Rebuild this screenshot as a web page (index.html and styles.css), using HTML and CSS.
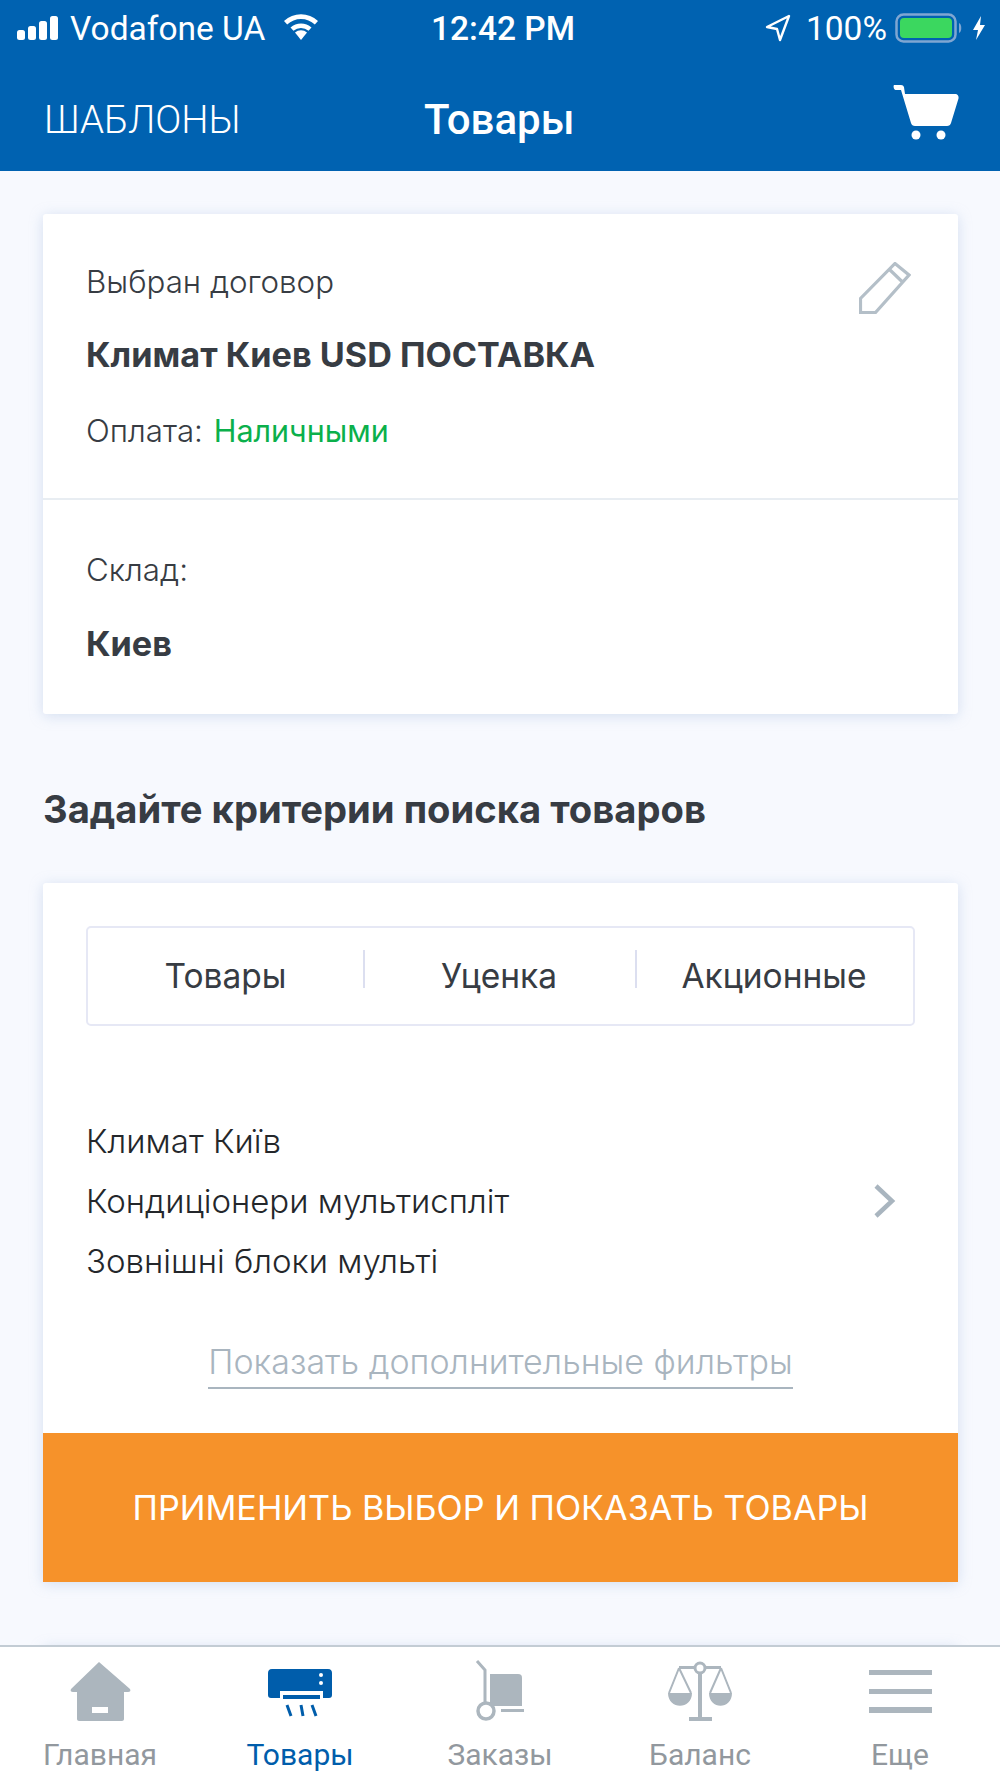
FILE: index.html
```html
<!DOCTYPE html>
<html lang="ru">
<head>
  <meta charset="UTF-8" />
  <meta name="viewport" content="width=device-width, initial-scale=1.0" />
  <title>Товары</title>
  <link rel="stylesheet" href="styles.css">
</head>
<body>
<div class="screen">
  <header class="top">
    <div class="status">
      <div class="status-left">
        <svg class="signal" width="44" height="26" viewBox="0 0 44 26"><rect x="1" y="15" width="8" height="10" rx="2.5"/><rect x="12" y="11" width="8" height="14" rx="2.5"/><rect x="23" y="6" width="8" height="19" rx="2.5"/><rect x="34" y="1" width="8" height="24" rx="2.5"/></svg>
        <span>Vodafone UA</span>
        <svg class="wifi" width="38" height="28" viewBox="0 0 38 28"><path d="M19 27l-6-7.5a9 9 0 0 1 12 0z"/><path d="M2 8a25 25 0 0 1 34 0l-3.200 3.600a20 20 0 0 0-27.600 0z"/><path d="M8.500 14.500a16 16 0 0 1 21 0l-3 3.200a11.500 11.500 0 0 0-15 0z"/></svg>
      </div>
      <div class="clock">12:42 PM</div>
      <div class="status-right">
        <svg class="arrow" width="26" height="28" viewBox="0 0 26 28"><path d="M24 2L2 13l10 2 3 11z" fill="none" stroke="#fff" stroke-width="2.400" stroke-linejoin="round"/></svg>
        <span>100%</span>
        <svg width="68" height="30" viewBox="0 0 68 30"><rect x="1.500" y="1.500" width="59" height="27" rx="7" fill="none" stroke="#7fa6d2" stroke-width="2.500"/><rect x="5" y="5" width="52" height="20" rx="4" fill="#3bd75f"/><path d="M64 10c3 1 3 9 0 10z" fill="#7fa6d2"/></svg>
        <svg class="bolt" width="14" height="26" viewBox="0 0 14 26"><path d="M9 1L1 15h5l-2 10 9-15H8z" fill="#fff"/></svg>
      </div>
    </div>
    <nav class="nav">
      <a class="nav-left">ШАБЛОНЫ</a>
      <h1>Товары</h1>
      <svg class="cart" width="66" height="56" viewBox="0 0 66 56"><path d="M1 0h7c1.500 0 2.500.8 3 2.200L12 9h50c2.500 0 4 2 3.500 4.500L58 38c-.5 2-2 3-4 3H22c-2 0-3.500-1-4-3L8 5H2.500C1 5 0 1 1 0z" fill="#fff"/><circle cx="23" cy="50" r="4.500" fill="#fff"/><circle cx="48" cy="50" r="4.500" fill="#fff"/></svg>
    </nav>
  </header>

  <main class="content">
    <section class="card">
      <div class="block block-contract">
        <div class="label-row">
          <p class="label">Выбран договор</p>
          <svg class="edit" width="52" height="52" viewBox="0 0 52 52"><path d="M1.500 36.500V50.500H16.500L50 13 36 1.500z M30 7L44 20.500" fill="none" stroke="#b4bfc8" stroke-width="3.200"/></svg>
        </div>
        <p class="value">Климат Киев USD ПОСТАВКА</p>
        <p class="pay">Оплата: <span class="green">Наличными</span></p>
      </div>
      <div class="block block-stock">
        <p class="label">Склад:</p>
        <p class="value">Киев</p>
      </div>
    </section>

    <h2>Задайте критерии поиска товаров</h2>

    <section class="card">
      <div class="filters">
        <div class="tabs">
          <div class="tab">Товары</div>
          <div class="tab">Уценка</div>
          <div class="tab">Акционные</div>
        </div>
        <div class="path">
          <div class="path-lines">
            <p>Климат Київ</p>
            <p>Кондиціонери мультиспліт</p>
            <p>Зовнішні блоки мульті</p>
          </div>
          <svg width="24" height="36" viewBox="0 0 24 36"><path d="M3 3l16 15L3 33" fill="none" stroke="#a9b5bf" stroke-width="4.500"/></svg>
        </div>
        <div class="more"><a>Показать дополнительные фильтры</a></div>
      </div>
      <button class="apply">ПРИМЕНИТЬ ВЫБОР И ПОКАЗАТЬ ТОВАРЫ</button>
    </section>

    <section class="card card-next"></section>
  </main>

  <footer class="tabbar">
    <div class="tabitem">
      <svg width="66" height="62" viewBox="0 0 66 62"><path fill-rule="evenodd" d="M32 2L63 29c1 2 0 3-2 3h-4v27c0 1-1 2-2 2H12c-1 0-2-1-2-2V32H6c-2 0-3-1-2-3z M25 47v6h16v-6z" fill="#acb6be"/></svg>
      <span>Главная</span>
    </div>
    <div class="tabitem active">
      <svg width="66" height="62" viewBox="0 0 66 62"><path d="M5 9h56c3 0 4 2 4 4v22c0 2-1 3-3 3h-6V31H13v7H4c-2 0-3-1-3-3V13c0-2 1-4 4-4z" fill="#005dab"/><rect x="16" y="35" width="37" height="4" fill="#005dab"/><circle cx="54" cy="15" r="2" fill="#fff"/><circle cx="54" cy="23" r="2" fill="#fff"/><path d="M20 45l4 11M34 45l2 11M45 45l4 11" stroke="#005dab" stroke-width="3"/></svg>
      <span>Товары</span>
    </div>
    <div class="tabitem">
      <svg width="50" height="62" viewBox="0 0 50 62"><path d="M2 1l8 9v32" fill="none" stroke="#acb6be" stroke-width="3"/><path d="M15 14h28c3 0 4 1.500 4 4v28H15z" fill="#acb6be"/><circle cx="11" cy="51" r="8" fill="none" stroke="#acb6be" stroke-width="3.500"/><path d="M26 49h23v3H26z" fill="#acb6be"/></svg>
      <span>Заказы</span>
    </div>
    <div class="tabitem">
      <svg width="66" height="62" viewBox="0 0 66 62"><path d="M33 10v47" fill="none" stroke="#acb6be" stroke-width="4"/><path d="M22 57h23v4H22zM12 6h42v3H12z" fill="#acb6be"/><circle cx="33" cy="8" r="5" fill="#fff" stroke="#acb6be" stroke-width="3"/><path d="M12 8L2 33M12 8l12 25M54 8L43 33M54 8l10 25" fill="none" stroke="#acb6be" stroke-width="2"/><path d="M1 33h24c0 17-24 17-24 0zM42 33h23c0 17-23 17-23 0z" fill="#acb6be"/></svg>
      <span>Баланс</span>
    </div>
    <div class="tabitem">
      <svg width="66" height="62" viewBox="0 0 66 62"><path d="M2 10h63v5H2zM2 29h63v5H2zM2 47h63v6H2z" fill="#acb6be"/></svg>
      <span>Еще</span>
    </div>
  </footer>
</div>
</body>
</html>
```

FILE: styles.css
```css
html, body {
  margin: 0;
  padding: 0;
}

body {
  font-family: Inter, "Noto Sans", sans-serif;
  background: #f7f9fe;
  color: #373c43;
}

p, h1, h2 {
  margin: 0;
}

.screen {
  width: 1000px;
  height: 1778px;
  display: flex;
  flex-direction: column;
  overflow: hidden;
}

.top {
  height: 171px;
  flex-shrink: 0;
  background: #0062b1;
  color: #fff;
  font-family: Roboto, "Liberation Sans", sans-serif;
}

.status {
  height: 56px;
  padding: 0 14px 2px 16px;
  display: grid;
  grid-template-columns: 1fr auto 1fr;
  align-items: center;
  font-size: 33.5px;
}

.status-left, .status-right {
  display: flex;
  align-items: center;
}

.status-left {
  gap: 10px;
}

.status-right {
  justify-content: flex-end;
  gap: 8px;
}

.signal {
  fill: #fff;
}

.wifi {
  fill: #fff;
  margin-left: 7px;
  margin-top: -2px;
}

.arrow {
  margin-right: 7px;
}

.bolt {
  margin-left: 1px;
}

.clock {
  font-weight: 500;
  padding-left: 4px;
}

.nav {
  height: 115px;
  padding: 8px 41px 0 44px;
  box-sizing: border-box;
  display: flex;
  align-items: center;
  position: relative;
  justify-content: space-between;
}

.nav-left {
  font-size: 38.5px;
  font-weight: 300;
}

.nav h1 {
  position: absolute;
  left: 424px;
  font-size: 42px;
  font-weight: 500;
}

.cart {
  margin-bottom: 14px;
}

.content {
  flex: 1;
  min-height: 0;
  overflow: hidden;
  padding: 43px 42px 0 43px;
}

.card {
  background: #fff;
  border-radius: 3px;
  box-shadow: 0 2px 14px rgba(150, 175, 215, 0.35);
}

.block {
  padding: 0 43px;
}

.block-contract {
  height: 286px;
  border-bottom: 2px solid #e8edf2;
  padding-top: 49px;
  box-sizing: border-box;
}

.block-stock {
  height: 214px;
  padding-top: 51px;
  box-sizing: border-box;
}

.label-row {
  display: flex;
  justify-content: space-between;
  align-items: flex-start;
}

.label, .pay {
  font-size: 31.3px;
  line-height: 38px;
  font-weight: 300;
}

.edit {
  margin-top: -1px;
  margin-right: 4px;
}

.value {
  font-size: 34.2px;
  line-height: 40px;
  font-weight: 700;
}

.block-contract .value {
  margin-top: 21px;
}

.block-stock .value {
  margin-top: 35px;
}

.pay {
  margin-top: 37px;
}

.green {
  color: #0bb04b;
  font-weight: 400;
  font-size: 30.5px;
  margin-left: 2px;
}

h2 {
  margin: 69px 0 48px;
  height: 52px;
  line-height: 52px;
  font-size: 38.2px;
  font-weight: 700;
}

.filters {
  padding: 43px 43px 0;
  height: 550px;
  box-sizing: border-box;
}

.tabs {
  height: 100px;
  width: 829px;
  box-sizing: border-box;
  border: 2px solid #e6e8f5;
  border-radius: 5px;
  display: grid;
  grid-template-columns: 275px 272px 1fr;
  align-items: center;
}

.tab {
  font-size: 33.5px;
  text-align: center;
  line-height: 38px;
  height: 38px;
  position: relative;
}

.tab + .tab::before {
  content: "";
  position: absolute;
  left: 0;
  top: -7px;
  width: 2px;
  height: 38px;
  background: #dcdff0;
}

.path {
  margin-top: 85px;
  display: flex;
  justify-content: space-between;
  align-items: center;
  padding-right: 18px;
}

.path-lines p {
  font-size: 33px;
  line-height: 60px;
  font-weight: 300;
  color: #24272b;
}

.more {
  margin-top: 51px;
  text-align: center;
}

.more a {
  display: inline-block;
  font-size: 34px;
  line-height: 40px;
  padding-bottom: 5px;
  font-weight: 300;
  color: #a9b5bf;
  border-bottom: 2px solid #a9b5bf;
}

.apply {
  display: block;
  width: 100%;
  height: 149px;
  border: none;
  background: #f6922a;
  color: #fff;
  font-family: inherit;
  font-size: 34.2px;
  font-weight: 400;
}

.card-next {
  margin-top: 64px;
  height: 200px;
}

.tabbar {
  height: 133px;
  flex-shrink: 0;
  background: #fff;
  border-top: 2px solid #c3ccd4;
  display: grid;
  grid-template-columns: repeat(5, 1fr);
  box-sizing: border-box;
  font-family: Roboto, "Liberation Sans", sans-serif;
}

.tabitem {
  display: flex;
  flex-direction: column;
  align-items: center;
  justify-content: flex-end;
  padding-bottom: 6px;
  gap: 15px;
  font-size: 30px;
  color: #92989e;
}

.tabitem.active {
  color: #005dab;
}
```
